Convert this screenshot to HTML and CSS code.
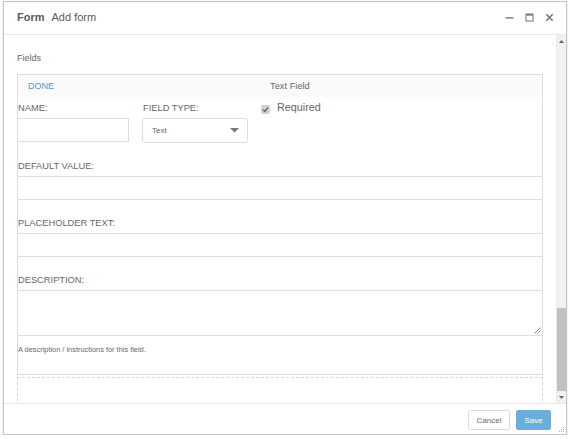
FILE: index.html
```html
<!DOCTYPE html>
<html>
<head>
<meta charset="utf-8">
<link rel="stylesheet" href="styles.css">
</head>
<body>
<div class="window">
  <div class="titlebar">
    <div class="title"><span class="title-main">Form</span><span class="title-sub">Add form</span></div>
    <div class="controls">
      <svg class="ctl" width="9" height="9" viewBox="0 0 9 9"><rect x="0.5" y="4.2" width="8" height="1.4" fill="#777"/></svg>
      <svg class="ctl" width="9" height="9" viewBox="0 0 9 9"><rect x="1" y="1" width="7" height="7" fill="none" stroke="#777" stroke-width="1"/><rect x="1" y="1" width="7" height="1.6" fill="#777"/></svg>
      <svg class="ctl" width="9" height="9" viewBox="0 0 9 9"><path d="M1.3 1.3 L7.7 7.7 M7.7 1.3 L1.3 7.7" stroke="#777" stroke-width="1.6"/></svg>
    </div>
  </div>
  <div class="body">
    <div class="content">
      <div class="section-title">Fields</div>
      <div class="field-card">
        <div class="card-head"><span class="done">DONE</span><span class="type-name">Text Field</span></div>
        <div class="card-body">
          <div class="row-top">
            <div class="col">
              <div class="lbl">NAME:</div>
              <div class="input input-name"></div>
            </div>
            <div class="col">
              <div class="lbl">FIELD TYPE:</div>
              <div class="select"><span class="select-text">Text</span><svg class="caret" width="9" height="5" viewBox="0 0 9 5"><path d="M0 0 L9 0 L4.5 4.5 Z" fill="#777"/></svg></div>
            </div>
            <div class="col col-req">
              <span class="checkbox"><svg width="9" height="9" viewBox="0 0 9 9"><rect x="0" y="0" width="9" height="9" rx="2" fill="#cfcfcf"/><path d="M2 4.6 L3.8 6.4 L7 2.6" fill="none" stroke="#555" stroke-width="1.2"/></svg></span>
              <span class="req">Required</span>
            </div>
          </div>
          <div class="group">
            <div class="lbl">DEFAULT VALUE:</div>
            <div class="input"></div>
          </div>
          <div class="group">
            <div class="lbl">PLACEHOLDER TEXT:</div>
            <div class="input"></div>
          </div>
          <div class="group">
            <div class="lbl">DESCRIPTION:</div>
            <div class="textarea"><svg class="resize" width="7" height="7" viewBox="0 0 7 7"><path d="M0.5 6.5 L6.5 0.5 M3.5 6.5 L6.5 3.5" stroke="#888" stroke-width="1"/></svg></div>
          </div>
          <div class="help">A description / instructions for this field.</div>
        </div>
      </div>
      <div class="dropzone"></div>
    </div>
    <div class="scrollbar">
      <div class="sb-btn"><svg width="5" height="3" viewBox="0 0 5 3"><path d="M0 3 L5 3 L2.5 0 Z" fill="#666"/></svg></div>
      <div class="sb-track"><div class="sb-thumb"></div></div>
      <div class="sb-btn"><svg width="5" height="3" viewBox="0 0 5 3"><path d="M0 0 L5 0 L2.5 3 Z" fill="#666"/></svg></div>
    </div>
  </div>
  <div class="footer">
    <button class="btn btn-cancel">Cancel</button>
    <button class="btn btn-save">Save</button>
    <svg class="grip" width="7" height="7" viewBox="0 0 7 7"><g fill="#aaa"><rect x="5" y="1" width="1" height="1"/><rect x="3" y="3" width="1" height="1"/><rect x="5" y="3" width="1" height="1"/><rect x="1" y="5" width="1" height="1"/><rect x="3" y="5" width="1" height="1"/><rect x="5" y="5" width="1" height="1"/></g></svg>
  </div>
</div>
</body>
</html>
```
FILE: styles.css
```css
* { box-sizing: border-box; }
html, body { margin: 0; padding: 0; background: #fff; }
body { font-family: "Liberation Sans", Arial, sans-serif; color: #666; }

.window {
  margin: 1px 0 0 3px;
  width: 564px;
  height: 434px;
  border: 1px solid #c4c4c4;
  box-shadow: 0 1px 2px rgba(0,0,0,0.15);
  display: flex;
  flex-direction: column;
  background: #fff;
  position: relative;
}

.titlebar {
  height: 33px;
  flex: none;
  border-bottom: 1px solid #e8e8e8;
  display: flex;
  align-items: center;
  justify-content: space-between;
  padding: 0 12px 2px 13px;
}
.title { font-size: 11px; color: #5a5a5a; }
.title-main { font-weight: bold; margin-right: 7px; }
.controls { display: flex; align-items: center; gap: 11px; }
.ctl { display: block; }

.body {
  height: 368px;
  flex: none;
  display: flex;
  overflow: hidden;
}
.content {
  flex: 1;
  overflow: hidden;
  padding: 17px 13px 0 13px;
}
.section-title { font-size: 9px; line-height: 12px; color: #666; margin-bottom: 10px; }

.field-card { border: 1px solid #dcdcdc; padding-bottom: 19px; }
.card-head {
  height: 22px;
  background: #fafafa;
  display: grid;
  grid-template-columns: 242px auto;
  align-items: center;
  padding-left: 10px;
  font-size: 9px;
}
.done { color: #5595c8; }
.type-name { color: #666; font-size: 9.3px; }

.card-body { margin: 0 -1px; }
.lbl { font-size: 9.3px; line-height: 12px; color: #666; padding-left: 1px; margin-bottom: 4px; }

.row-top {
  margin-top: 5px;
  display: grid;
  grid-template-columns: 125px 119px 1fr;
}
.input { height: 24px; border: 1px solid #dedede; background: #fff; }
.input-name { width: 112px; }
.select {
  width: 106px;
  height: 25px;
  border: 1px solid #dedede;
  border-radius: 3px;
  display: flex;
  align-items: center;
  justify-content: space-between;
  padding: 0 8px 0 9px;
  font-size: 8px;
  color: #666;
}
.caret { display: block; }
.col-req { display: flex; align-items: flex-start; padding-top: 2px; }
.checkbox { display: block; margin-top: 1px; width: 9px; height: 9px; }
.checkbox svg { display: block; }
.req { font-size: 10.8px; line-height: 12px; margin-left: 7px; color: #666; margin-top: -3px; }

.group { margin-top: 17px; }
.textarea { height: 46px; border: 1px solid #dedede; position: relative; }
.resize { position: absolute; right: 1px; bottom: 1px; }
.help { margin-top: 9px; font-size: 7.4px; line-height: 10px; color: #666; padding-left: 1px; }

.dropzone { margin-top: 2px; height: 40px; border: 1px dashed #d8d8d8; }

.scrollbar {
  width: 10px;
  flex: none;
  display: flex;
  flex-direction: column;
  background: #f1f1f1;
  border-left: 1px solid #ececec;
}
.sb-btn { height: 12px; display: flex; align-items: center; justify-content: center; flex: none; }
.sb-btn svg { display: block; }
.sb-track { flex: 1; display: flex; flex-direction: column; justify-content: flex-end; }
.sb-thumb { height: 83px; background: #c1c1c1; }

.footer {
  flex: 1;
  border-top: 1px solid #e8e8e8;
  display: flex;
  justify-content: flex-end;
  align-items: flex-start;
  padding: 6px 15px 0 0;
  gap: 6px;
  position: relative;
}
.btn {
  font-family: "Liberation Sans", Arial, sans-serif;
  font-size: 8px;
  height: 20px;
  border-radius: 2px;
  padding: 0;
  margin: 0;
}
.btn-cancel { width: 42px; background: #fff; border: 1px solid #dcdcdc; color: #666; }
.btn-save { width: 35px; background: #6aafdb; border: 1px solid #6aafdb; color: #fff; }
.grip { position: absolute; right: 1px; bottom: 1px; }
```
